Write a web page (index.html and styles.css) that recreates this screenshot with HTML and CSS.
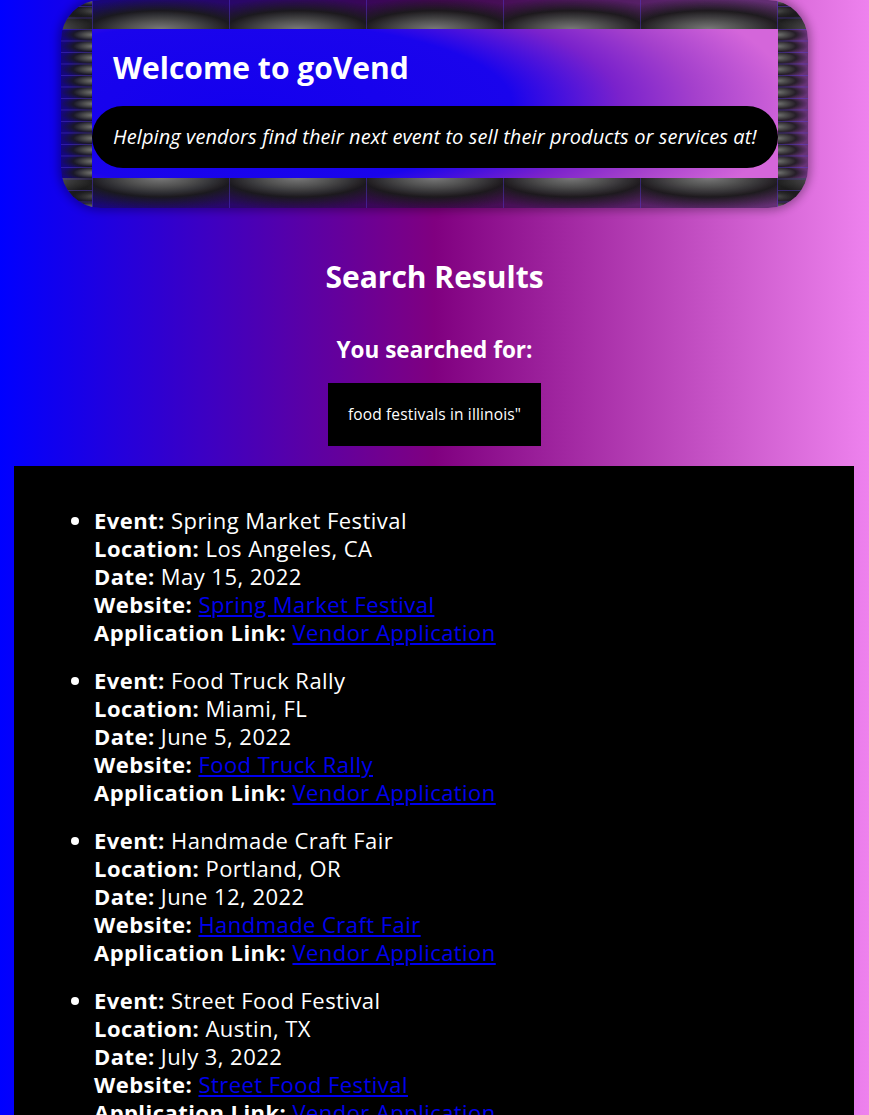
FILE: index.html
```html
<!DOCTYPE html>
<html lang="en">
<head>
<meta charset="utf-8">
<title>goVend - Search Results</title>
<link rel="stylesheet" href="styles.css">
</head>
<body>
<header class="frame">
  <div class="banner">
    <h1 class="title">Welcome to goVend</h1>
    <p class="tagline">Helping vendors find their next event to sell their products or services at!</p>
  </div>
</header>
<main class="page">
  <h2 class="heading">Search Results</h2>
  <h3 class="subheading">You searched for:</h3>
  <div class="query">food festivals in illinois"</div>
  <section class="results">
    <ul class="list">
      <li class="item"><b>Event:</b> Spring Market Festival<br><b>Location:</b> Los Angeles, CA<br><b>Date:</b> May 15, 2022<br><b>Website:</b> <a href="#">Spring Market Festival</a><br><b>Application Link:</b> <a href="#">Vendor Application</a></li>
      <li class="item"><b>Event:</b> Food Truck Rally<br><b>Location:</b> Miami, FL<br><b>Date:</b> June 5, 2022<br><b>Website:</b> <a href="#">Food Truck Rally</a><br><b>Application Link:</b> <a href="#">Vendor Application</a></li>
      <li class="item"><b>Event:</b> Handmade Craft Fair<br><b>Location:</b> Portland, OR<br><b>Date:</b> June 12, 2022<br><b>Website:</b> <a href="#">Handmade Craft Fair</a><br><b>Application Link:</b> <a href="#">Vendor Application</a></li>
      <li class="item"><b>Event:</b> Street Food Festival<br><b>Location:</b> Austin, TX<br><b>Date:</b> July 3, 2022<br><b>Website:</b> <a href="#">Street Food Festival</a><br><b>Application Link:</b> <a href="#">Vendor Application</a></li>
    </ul>
  </section>
</main>
</body>
</html>
```

FILE: styles.css
```css
html, body {
  margin: 0;
  padding: 0;
}
body {
  min-height: 1115px;
  background: linear-gradient(to right, #0000ff, #800080, #ee82ee);
  color: #fff;
  font-family: "Open Sans", "Noto Sans", sans-serif;
}
.frame {
  width: 686px;
  margin: 0 auto;
  padding: 29px 30px 30px 31px;
  border-radius: 40px;
  background:
    linear-gradient(to right, rgba(90, 60, 230, 0.4) 1px, transparent 1px) 31px 0 / 137px 29px repeat-x,
    linear-gradient(to right, rgba(90, 60, 230, 0.4) 1px, transparent 1px) 31px 100% / 137px 30px repeat-x,
    linear-gradient(to bottom, rgba(90, 60, 230, 0.4) 1px, transparent 1px) 0 29px / 31px 11.5px repeat-y,
    linear-gradient(to bottom, rgba(90, 60, 230, 0.4) 1px, transparent 1px) 100% 29px / 30px 11.5px repeat-y,
    radial-gradient(ellipse 95% 115% at 50% 100%, rgba(120, 120, 120, 1) 0%, rgba(82, 82, 82, 1) 24%, rgba(26, 26, 26, 0.95) 55%, rgba(20, 16, 40, 0) 92%) 31px 0 / 137px 29px repeat-x,
    radial-gradient(ellipse 95% 115% at 50% 0%, rgba(120, 120, 120, 1) 0%, rgba(82, 82, 82, 1) 24%, rgba(26, 26, 26, 0.95) 55%, rgba(20, 16, 40, 0) 92%) 31px 100% / 137px 30px repeat-x,
    radial-gradient(ellipse 110% 85% at 100% 50%, rgba(115, 115, 115, 1) 0%, rgba(78, 78, 78, 1) 24%, rgba(26, 26, 26, 0.85) 55%, rgba(20, 16, 40, 0) 90%) 0 29px / 31px 11.5px repeat-y,
    radial-gradient(ellipse 110% 85% at 0% 50%, rgba(115, 115, 115, 1) 0%, rgba(78, 78, 78, 1) 24%, rgba(26, 26, 26, 0.85) 55%, rgba(20, 16, 40, 0) 90%) 100% 29px / 30px 11.5px repeat-y,
    rgba(24, 12, 50, 0.6);
  box-shadow: 0 0 8px 3px rgba(0, 0, 0, 0.3);
}
.banner {
  padding-bottom: 10px;
  background: radial-gradient(ellipse 540px 165px at 150px 75px, #1400ee 0%, #1a04ec 50%, #4a12dc 60%, #7a22cc 70%, #a440cc 84%, #d466da 102%);
}
.title {
  margin: 0;
  padding: 20px 20px 20px 21px;
  font-size: 30px;
  line-height: 37px;
  font-weight: 700;
}
.tagline {
  margin: 0;
  padding: 18px 20px 18px 21px;
  background: #000;
  border-radius: 31px;
  font-size: 20px;
  line-height: 26px;
  font-style: italic;
  letter-spacing: 0.1px;
}
.page {
  text-align: center;
}
.heading {
  margin: 50px 0 0;
  font-size: 30px;
  line-height: 37px;
  font-weight: 700;
}
.subheading {
  margin: 41px 0 0;
  font-size: 22.5px;
  line-height: 28px;
  font-weight: 700;
}
.query {
  display: inline-block;
  margin-top: 19px;
  padding: 22px 20px;
  background: #000;
  font-size: 15.5px;
  line-height: 19px;
  letter-spacing: 0.15px;
}
.results {
  margin: 20px 15px 0 14px;
  padding: 20px 40px 10px;
  background: #000;
  text-align: left;
}
.list {
  margin: 20px 0 0;
  padding-left: 40px;
}
.item {
  margin-bottom: 20px;
  font-size: 22px;
  line-height: 28px;
  letter-spacing: 0.45px;
}
.item a {
  color: #0000ee;
}
```
